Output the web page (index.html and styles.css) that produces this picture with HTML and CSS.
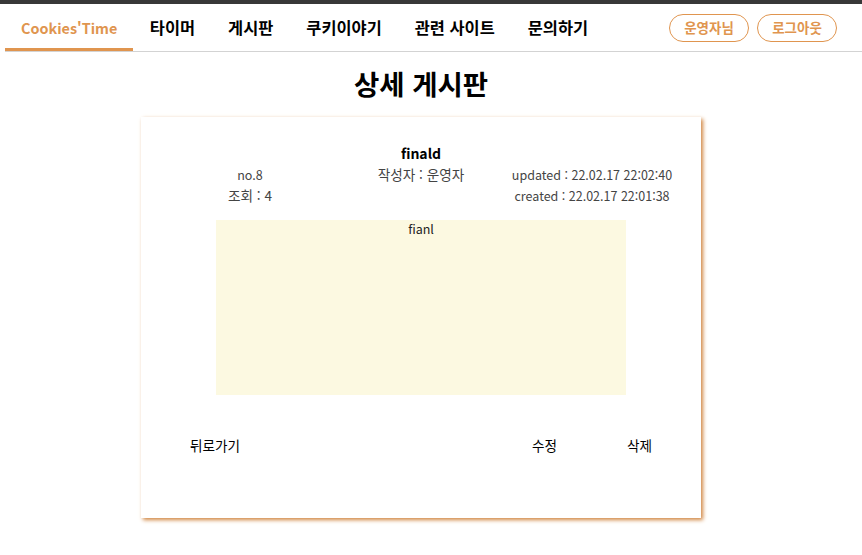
FILE: index.html
```html
<!DOCTYPE html>
<html lang="ko">
<head>
<meta charset="utf-8">
<title>상세 게시판</title>
<link rel="stylesheet" href="styles.css">
</head>
<body>
<div class="topbar"></div>
<nav class="nav">
  <a class="nav-item active">Cookies'Time</a>
  <a class="nav-item">타이머</a>
  <a class="nav-item">게시판</a>
  <a class="nav-item">쿠키이야기</a>
  <a class="nav-item">관련 사이트</a>
  <a class="nav-item">문의하기</a>
  <div class="nav-actions">
    <button class="pill">운영자님</button>
    <button class="pill">로그아웃</button>
  </div>
</nav>
<main class="main">
  <h2 class="page-title">상세 게시판</h2>
  <section class="card">
    <div class="post-title">finald</div>
    <div class="meta">
      <div class="meta-col">
        <div>no.8</div>
        <div class="ko">조회 : 4</div>
      </div>
      <div class="meta-col">
        <div class="ko">작성자 : 운영자</div>
      </div>
      <div class="meta-col">
        <div>updated : 22.02.17 22:02:40</div>
        <div>created : 22.02.17 22:01:38</div>
      </div>
    </div>
    <div class="content">fianl</div>
    <div class="actions">
      <a class="action">뒤로가기</a>
      <div class="action-group">
        <a class="action">수정</a>
        <a class="action">삭제</a>
      </div>
    </div>
  </section>
</main>
</body>
</html>
```
FILE: styles.css
```css
* { box-sizing: border-box; }
body {
  margin: 0;
  font-family: "Noto Sans CJK KR", "Noto Sans", sans-serif;
  color: #000;
  background: #fff;
}
.topbar {
  height: 4px;
  background: #383838;
}
.nav {
  display: flex;
  align-items: stretch;
  height: 48px;
  margin-left: 5px;
  padding-right: 25px;
  border-bottom: 1px solid #d3d3d3;
}
.nav-item {
  display: flex;
  align-items: center;
  padding: 2px 16.5px 0;
  font-size: 16.4px;
  font-weight: 700;
  color: #000;
  border-bottom: 3px solid transparent;
}
.nav-item.active {
  color: #e0954f;
  border-bottom-color: #e0954f;
  padding: 2px 16px 0;
  font-size: 14.4px;
}
.nav-actions {
  margin-left: auto;
  display: flex;
  align-items: center;
  gap: 8px;
}
.pill {
  width: 80px;
  height: 28px;
  border: 1px solid #e0954f;
  border-radius: 14px;
  background: #fff;
  color: #e0954f;
  font-family: inherit;
  font-size: 13.5px;
  font-weight: 700;
  padding: 0;
  line-height: 1;
}
.main {
  width: 842px;
  padding-bottom: 30px;
}
.page-title {
  margin: 0;
  padding-top: 12px;
  height: 65px;
  text-align: center;
  font-size: 27.5px;
  line-height: 38px;
  font-weight: 700;
}
.card {
  width: 560px;
  height: 401px;
  margin: 0 auto;
  padding-top: 26px;
  background: #fff;
  box-shadow: 2px 2px 4px #d0853f;
}
.post-title {
  text-align: center;
  font-size: 14px;
  font-weight: 700;
  line-height: 20px;
}
.meta {
  display: grid;
  grid-template-columns: 171px 171px 171px;
  justify-content: center;
  margin-top: 1px;
  font-size: 12.5px;
  line-height: 21px;
  color: #444;
  text-align: center;
}
.meta .ko { font-size: 13.6px; }
.content {
  width: 410px;
  height: 175px;
  margin: 14px auto 0;
  background: #fcf9e1;
  text-align: center;
  font-size: 12.5px;
  line-height: 18px;
  color: #222;
}
.actions {
  display: flex;
  justify-content: space-between;
  padding: 0 49px;
  margin-top: 41px;
  font-size: 13.6px;
  line-height: 18px;
}
.action-group {
  display: flex;
  gap: 70px;
}
.action { color: #000; }
```
